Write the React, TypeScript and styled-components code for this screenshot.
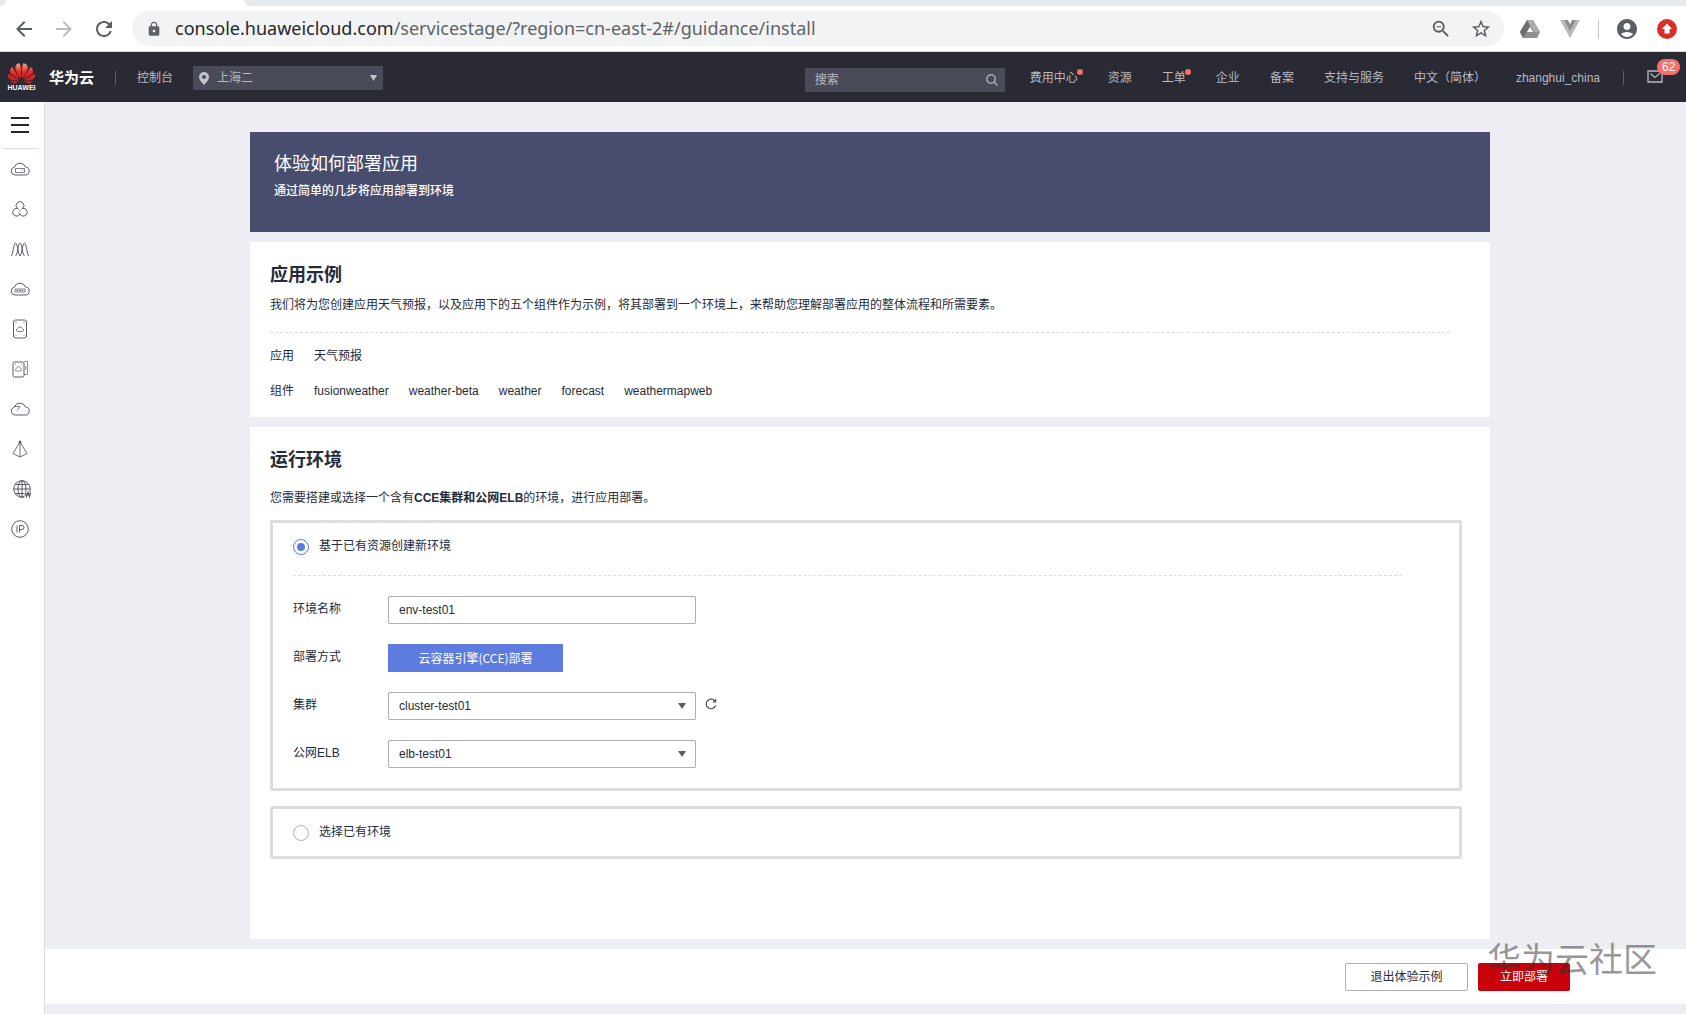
import React, { useState } from "react";
import styled, { createGlobalStyle } from "styled-components";
import {
  MdAccountCircle,
  MdArrowBack,
  MdArrowForward,
  MdLock,
  MdRefresh,
  MdStarBorder,
  MdZoomOut,
} from "react-icons/md";
import { SiHuawei } from "react-icons/si";

const sans = `"Liberation Sans", "Noto Sans CJK SC", sans-serif`;
const cjk = `"Noto Sans CJK SC", sans-serif`;

const GlobalStyle = createGlobalStyle`
  *, *::before, *::after { box-sizing: border-box; }
  body { margin: 0; background: #edeef3; }
  h1, h2, p, dl, dd, fieldset { margin: 0; }
  button, input, select { font: inherit; color: inherit; }
  button { cursor: pointer; }
`;

const Page = styled.div`
  display: flex;
  flex-direction: column;
  min-height: 100vh;
  color: #252b3a;
  font: 12px/18px ${sans};
`;

/* Browser chrome */

const TabStrip = styled.div`
  display: flex;
  justify-content: space-between;
  gap: 238px;
  height: 6px;
  background: #fff;

  &::before,
  &::after {
    content: "";
    background: #e7eaed;
  }

  &::before {
    width: 6px;
    border-bottom-right-radius: 6px;
  }

  &::after {
    flex: 1;
    border-bottom-left-radius: 6px;
  }
`;

const Toolbar = styled.div`
  display: flex;
  align-items: center;
  height: 46px;
  padding: 0 7px 0 12px;
  background: #fff;
  border-bottom: 1px solid #d5d7da;
`;

const NavButtons = styled.div`
  display: flex;
  gap: 16px;
`;

const ToolButton = styled.button<{ $muted?: boolean }>`
  display: flex;
  align-items: center;
  justify-content: center;
  width: 24px;
  height: 28px;
  padding: 0;
  border: 0;
  background: none;
  color: ${(p) => (p.$muted ? "#bbbdc0" : "#5a5d61")};
`;

const Omnibox = styled.div`
  display: flex;
  flex: 1;
  align-items: center;
  height: 35px;
  margin-left: 16px;
  padding: 0 11px 0 14px;
  border-radius: 18px;
  background: #f1f3f4;
  color: #5f6368;
`;

const Address = styled.div`
  flex: 1;
  padding: 0 0 2px 13px;
  font: 18px/24px "Noto Sans", ${cjk};
  white-space: nowrap;

  b {
    color: #25282c;
    font-weight: 400;
  }
`;

const OmniActions = styled.div`
  display: flex;
  gap: 16px;
`;

const Extensions = styled.div`
  display: flex;
  align-items: center;
  gap: 16px;
  margin-left: 14px;
`;

const ToolDivider = styled.i`
  width: 1px;
  height: 20px;
  background: #c6c9cd;
`;

/* Console header */

const Header = styled.header`
  display: flex;
  align-items: center;
  height: 50px;
  padding: 2px 8px 0;
  background: #292a33;
  color: #b9bac4;
`;

const Brand = styled.a`
  display: flex;
  align-items: center;
  gap: 14px;
  padding-bottom: 2px;
  color: #fff;
  font: 700 15px/24px ${cjk};
  text-decoration: none;
`;

const LogoMark = styled.span`
  display: flex;
  flex-direction: column;
  align-items: center;
  width: 27px;
  font: 700 7px/8px "Liberation Sans", sans-serif;
`;

const Bar = styled.i<{ $gap: number }>`
  width: 1px;
  height: 14px;
  margin: 0 ${(p) => p.$gap}px;
  background: #5c5d68;
`;

const HeaderLink = styled.a<{ $dot?: boolean }>`
  position: relative;
  color: inherit;
  text-decoration: none;
  white-space: nowrap;

  &::after {
    content: ${(p) => (p.$dot ? '""' : "none")};
    position: absolute;
    top: 0;
    right: -5px;
    width: 6px;
    height: 6px;
    border-radius: 50%;
    background: #f66f6a;
  }
`;

const HeaderField = styled.label`
  display: flex;
  align-items: center;
  gap: 8px;
  height: 24px;
  background: #494b58;

  select,
  input {
    flex: 1;
    min-width: 0;
    height: 24px;
    padding: 0;
    border: 0;
    outline: 0;
    background: none;
    color: #b9bac4;
    appearance: none;
  }

  input::placeholder {
    color: #b9bac4;
    opacity: 1;
  }
`;

const RegionField = styled(HeaderField)`
  width: 190px;
  margin-left: 20px;
  padding: 0 6px;
`;

const SearchField = styled(HeaderField)`
  width: 200px;
  margin: 4px 0 0 auto;
  padding: 0 7px 0 10px;
`;

const HeaderNav = styled.nav`
  display: flex;
  gap: 30px;
  margin-left: 25px;
`;

const MailLink = styled.a`
  position: relative;
  display: flex;
  margin: 0 15px 4px 0;
  color: #b9bac4;
`;

const MailBadge = styled.span`
  position: absolute;
  top: -11px;
  left: 10px;
  padding: 0 5px;
  border-radius: 8px;
  background: #f66f6a;
  color: #fff;
  font-size: 12px;
  line-height: 16px;
`;

/* Body */

const Body = styled.div`
  display: flex;
  flex: 1;
`;

const Sidebar = styled.nav`
  display: flex;
  flex-direction: column;
  flex-shrink: 0;
  width: 45px;
  padding: 0 5px 0 3px;
  border-right: 1px solid #dddee3;
  background: #fff;
  color: #4a4c57;
`;

const MenuButton = styled.button`
  display: flex;
  align-items: center;
  justify-content: center;
  height: 47px;
  padding: 0 2px 0 0;
  border: 0;
  border-bottom: 1px solid #dcdde1;
  background: none;
  color: #22232b;
`;

const SideLink = styled.a`
  display: flex;
  align-items: center;
  justify-content: center;
  height: 40px;
  padding-right: 2px;
  color: inherit;
`;

const Column = styled.div`
  display: flex;
  flex: 1;
  flex-direction: column;
  min-width: 0;
  padding-bottom: 10px;
`;

const Main = styled.main`
  display: flex;
  flex: 1;
  flex-direction: column;
  gap: 10px;
  width: 100%;
  max-width: 1249px;
  margin: 0 auto;
  padding: 30px 0 10px 9px;
`;

const Banner = styled.section`
  min-height: 100px;
  padding: 16px 24px;
  background: #484d6e;
  color: #fff;

  h1 {
    margin-bottom: 2px;
    font: 400 18px/28px ${cjk};
  }

  p {
    font: 500 12px/24px ${cjk};
  }
`;

const Card = styled.section<{ $grow?: boolean }>`
  flex: ${(p) => (p.$grow ? 1 : "none")};
  padding: 19px 28px 16px 20px;
  background: #fff;
`;

const CardTitle = styled.h2`
  font: 700 18px/24px ${cjk};
`;

const Intro = styled.p<{ $gap: number }>`
  margin-top: ${(p) => p.$gap}px;
  line-height: 20px;
`;

const Dashes = styled.hr<{ $before: number; $after: number; $end: number }>`
  margin: ${(p) => `${p.$before}px ${p.$end}px ${p.$after}px 0`};
  border: 0;
  border-top: 1px dashed #dddee3;
`;

const Facts = styled.dl`
  display: grid;
  grid-template-columns: max-content 1fr;
  gap: 15px 20px;
  line-height: 20px;

  dd {
    display: flex;
    gap: 20px;
  }
`;

const OptionBox = styled.fieldset`
  min-width: 0;
  margin-top: 12px;
  padding: 14px 20px 20px;
  border: 3px solid #dcdddd;
  border-radius: 2px;

  & + & {
    margin-top: 15px;
    padding-bottom: 13px;
  }
`;

const RadioLabel = styled.label`
  display: flex;
  align-items: center;
  gap: 10px;
  height: 20px;

  span {
    padding-bottom: 2px;
  }

  input {
    display: grid;
    place-items: center;
    width: 16px;
    height: 16px;
    margin: 0;
    border: 1px solid #adb0b8;
    border-radius: 50%;
    background: #fff;
    appearance: none;
  }

  input:checked {
    border-color: #5e7ce0;
  }

  input:checked::after {
    content: "";
    width: 8px;
    height: 8px;
    border-radius: 50%;
    background: #5e7ce0;
  }
`;

const FormGrid = styled.div`
  display: grid;
  grid-template-columns: 95px 1fr;
  gap: 20px 0;
`;

const FieldLabel = styled.label`
  line-height: 26px;
`;

const FieldCell = styled.div`
  display: flex;
  align-items: center;
  gap: 9px;
`;

const TextInput = styled.input`
  width: 308px;
  height: 28px;
  padding: 0 10px;
  border: 1px solid #adb0b8;
  border-radius: 1px;
  outline: 0;
  background: #fff;
`;

const SelectShell = styled.div`
  display: grid;
  align-items: center;
  width: 308px;

  select,
  svg {
    grid-area: 1 / 1;
  }

  select {
    height: 28px;
    padding: 0 10px;
    border: 1px solid #adb0b8;
    border-radius: 1px;
    outline: 0;
    background: #fff;
    appearance: none;
  }

  svg {
    justify-self: end;
    margin-right: 10px;
    pointer-events: none;
  }
`;

const ModeButton = styled.button`
  min-width: 175px;
  height: 28px;
  padding: 0 30px;
  border: 0;
  background: #5e7ce0;
  color: #fff;
  font: 12px/28px ${cjk};
`;

const IconButton = styled.button`
  display: flex;
  padding: 0 0 4px;
  border: 0;
  background: none;
  color: #4a4c57;
`;

const Footer = styled.footer`
  position: relative;
  display: flex;
  justify-content: flex-end;
  gap: 10px;
  height: 55px;
  padding: 14px 116px 0 0;
  background: #fff;
`;

const ActionButton = styled.button<{ $primary?: boolean }>`
  min-width: ${(p) => (p.$primary ? 92 : 123)}px;
  height: 28px;
  padding: 0 20px;
  border: 1px solid ${(p) => (p.$primary ? "#c7000b" : "#adb0b8")};
  border-radius: 2px;
  background: ${(p) => (p.$primary ? "#c7000b" : "#fff")};
  color: ${(p) => (p.$primary ? "#fff" : "#252b3a")};
`;

const Watermark = styled.span`
  position: absolute;
  top: -16px;
  right: 29px;
  color: rgba(50, 50, 50, 0.5);
  font: 34px/50px ${cjk};
  pointer-events: none;
`;

/* Drawings */

const Caret = ({ color, size = 8 }: { color: string; size?: number }) => (
  <svg width={size} height="6" viewBox="0 0 8 6" preserveAspectRatio="none" aria-hidden>
    <path d="M0 0h8L4 6z" fill={color} />
  </svg>
);

const HuaweiLogo = () => (
  <LogoMark>
    <svg width="27" height="21" viewBox="0 0 27 21" aria-hidden>
      <defs>
        <linearGradient id="petals" x1="0" y1="0" x2="0" y2="1">
          <stop offset="0" stopColor="#f8a282" />
          <stop offset="0.4" stopColor="#e5302a" />
          <stop offset="1" stopColor="#d0121b" />
        </linearGradient>
      </defs>
      <SiHuawei x={0} y={-3} size={27} fill="url(#petals)" />
    </svg>
    HUAWEI
  </LogoMark>
);

const DriveIcon = () => (
  <svg width="20" height="18" viewBox="0 0 20 18" aria-hidden>
    <path d="M7 0h6l7 12-3 6H3l-3-6z" fill="#8f8f8f" />
    <path d="M7 0h6l7 12h-6z" fill="#adadad" />
    <path d="M7 0 0 12l3 6L10 6z" fill="#6f6f6f" />
    <path d="m10 7 3 5H7z" fill="#fff" />
  </svg>
);

const VueIcon = () => (
  <svg width="20" height="18" viewBox="0 0 20 18" aria-hidden>
    <path d="M0 0h20L10 18z" fill="#b9b9b9" />
    <path d="M4 0h4l2 4 2-4h4l-6 11z" fill="#8c8c8c" />
    <path d="M8 0h4l-2 4z" fill="#fff" />
  </svg>
);

const UpdateIcon = () => (
  <svg width="20" height="20" viewBox="0 0 20 20" aria-hidden>
    <circle cx="10" cy="10" r="10" fill="#d93025" />
    <path d="M10 4.5 15 10h-2.5v4.5h-5V10H5z" fill="#fff" />
  </svg>
);

const PinIcon = () => (
  <svg width="10" height="13" viewBox="0 0 10 13" aria-hidden>
    <path
      d="M5 0a5 5 0 0 0-5 5c0 3.4 5 8 5 8s5-4.6 5-8a5 5 0 0 0-5-5zm0 3a2 2 0 1 1 0 4 2 2 0 0 1 0-4z"
      fill="#c3c4cc"
      fillRule="evenodd"
    />
  </svg>
);

const SearchIcon = () => (
  <svg width="12" height="12" viewBox="0 0 12 12" fill="none" stroke="#a9abb5" strokeWidth="1.5" aria-hidden>
    <circle cx="5" cy="5" r="4.2" />
    <path d="m8 8 3.5 3.5" />
  </svg>
);

const MailIcon = () => (
  <svg width="16" height="13" viewBox="0 0 16 13" fill="none" stroke="currentColor" strokeWidth="1.3" aria-hidden>
    <path d="M1 1h14v11H1z" />
    <path d="m3.5 3.5 4.500 4 4.500-4" />
  </svg>
);

const MenuIcon = () => (
  <svg width="18" height="16" viewBox="0 0 18 16" stroke="currentColor" strokeWidth="2" aria-hidden>
    <path d="M0 1h18M0 8h18M0 15h18" />
  </svg>
);

const ReloadIcon = () => (
  <svg width="12" height="12" viewBox="0 0 12 12" fill="none" stroke="currentColor" strokeWidth="1.2" aria-hidden>
    <path d="M10 3.200A4.800 4.800 0 1 0 10.600 7.500" />
    <path d="M10.600 1v2.800H8" />
  </svg>
);

const cloud = "M5 16a4 4 0 0 1-.6-7.9A5.8 5.8 0 0 1 15.4 8 4 4 0 0 1 15 16z";

const sideIcons: { name: string; art: React.ReactNode }[] = [
  {
    name: "云服务器",
    art: (
      <>
        <path d={cloud} />
        <path d="M5.500 9.500h9v4h-9zM12.500 10.500v1" strokeWidth="0.7" />
      </>
    ),
  },
  {
    name: "应用组合",
    art: (
      <>
        <path d="M7.300 9.400a3.900 3.900 0 1 1 5.400 0M7.300 9.400A3.900 3.900 0 1 0 10 15.200a3.900 3.900 0 1 0 2.700-5.800" />
        <path d="m10 15.200-1.200-2M10 11v1.500M7.300 9.400l1.500.8M12.700 9.400l-1.500.8" strokeWidth="0.7" />
      </>
    ),
  },
  {
    name: "弹性伸缩",
    art: (
      <>
        <path d="M1 17C3.500 15 3.500 4 5.500 4S8 15 10 17M5.500 17C8 15 8 4 10 4s2 11 4.500 13M10 17c2-2 2.500-13 4.500-13S16.500 15 19 17" />
      </>
    ),
  },
  {
    name: "裸金属",
    art: (
      <>
        <path d={cloud} />
        <path d="M5 10h10v3H5z" strokeWidth="0.7" />
        <path d="M6.500 11.500h7" strokeDasharray="1.500 1" />
      </>
    ),
  },
  {
    name: "云硬盘",
    art: (
      <>
        <rect x="3.500" y="1" width="13" height="18" rx="2" />
        <path d="M7.500 12.500a1.500 1.500 0 0 1 0-2.900 2.700 2.700 0 0 1 5 0 1.500 1.500 0 0 1 0 2.900z" strokeWidth="0.7" />
        <path d="M5.500 3.500h1M13.500 3.500h1M5.500 16.500h1M13.500 16.500h1" strokeWidth="0.7" />
      </>
    ),
  },
  {
    name: "备份",
    art: (
      <>
        <rect x="3" y="3" width="11" height="15" rx="1.500" />
        <path d="M14 2.500h3.500v13H14M15.800 7v4" strokeWidth="0.6" />
        <path d="M6.500 12a1.200 1.200 0 0 1 0-2.400 2 2 0 0 1 4 0 1.200 1.200 0 0 1 0 2.400z" strokeWidth="0.6" />
        <path d="M5 5h1M11 5h1" strokeWidth="0.7" />
      </>
    ),
  },
  {
    name: "虚拟私有云",
    art: (
      <>
        <path d={cloud} />
        <path d="M4.500 7.500H10L7 11.500" strokeWidth="0.7" />
      </>
    ),
  },
  {
    name: "负载均衡",
    art: (
      <>
        <path d="M10 3 3 14.500l7 3.500 7-3.500zM10 3v15" strokeWidth="0.800" />
        <circle cx="10" cy="3" r="1" fill="currentColor" />
      </>
    ),
  },
  {
    name: "域名",
    art: (
      <g transform="translate(2 0)">
        <circle cx="10" cy="10" r="8.300" />
        <ellipse cx="10" cy="10" rx="4" ry="8.300" />
        <path d="M10 1.700v16.600M1.700 10h16.600M3.200 5.500h13.600M3.200 14.500h13.600" />
        <path d="M12.500 13h8v6h-8z" fill="#fff" stroke="none" />
        <path d="m13.500 13.500 1 4 1.500-4 1.500 4 1-4" strokeWidth="1.200" />
      </g>
    ),
  },
  {
    name: "弹性公网IP",
    art: (
      <>
        <circle cx="10" cy="10" r="8.300" />
        <path d="M7 6.500v7M9.500 13.500v-7H12a2 2 0 0 1 0 4H9.500" />
      </>
    ),
  },
];

const headerLinks = [
  { text: "费用中心", dot: true },
  { text: "资源" },
  { text: "工单", dot: true },
  { text: "企业" },
  { text: "备案" },
  { text: "支持与服务" },
  { text: "中文（简体）" },
  { text: "zhanghui_china" },
];

const components = ["fusionweather", "weather-beta", "weather", "forecast", "weathermapweb"];

export default function App() {
  const [mode, setMode] = useState<"new" | "existing">("new");
  const [envName, setEnvName] = useState("env-test01");

  return (
    <Page>
      <GlobalStyle />
      <TabStrip />
      <Toolbar>
        <NavButtons>
          <ToolButton aria-label="后退"><MdArrowBack size={24} /></ToolButton>
          <ToolButton aria-label="前进" $muted><MdArrowForward size={24} /></ToolButton>
          <ToolButton aria-label="刷新"><MdRefresh size={26} /></ToolButton>
        </NavButtons>
        <Omnibox>
          <MdLock size={16} />
          <Address>
            <b>console.huaweicloud.com</b>/servicestage/?region=cn-east-2#/guidance/install
          </Address>
          <OmniActions>
            <ToolButton aria-label="缩小"><MdZoomOut size={22} /></ToolButton>
            <ToolButton aria-label="收藏"><MdStarBorder size={22} /></ToolButton>
          </OmniActions>
        </Omnibox>
        <Extensions>
          <ToolButton aria-label="云端硬盘"><DriveIcon /></ToolButton>
          <ToolButton aria-label="Vue"><VueIcon /></ToolButton>
          <ToolDivider />
          <ToolButton aria-label="账户"><MdAccountCircle size={28} /></ToolButton>
          <ToolButton aria-label="更新"><UpdateIcon /></ToolButton>
        </Extensions>
      </Toolbar>

      <Header>
        <Brand href="#home">
          <HuaweiLogo />
          华为云
        </Brand>
        <Bar $gap={21} />
        <HeaderLink href="#console">控制台</HeaderLink>
        <RegionField>
          <PinIcon />
          <select aria-label="区域" defaultValue="上海二">
            <option>上海二</option>
          </select>
          <Caret color="#c3c4cc" size={7} />
        </RegionField>
        <SearchField>
          <input type="text" placeholder="搜索" aria-label="搜索" />
          <SearchIcon />
        </SearchField>
        <HeaderNav>
          {headerLinks.map((link) => (
            <HeaderLink key={link.text} href="#nav" $dot={link.dot}>
              {link.text}
            </HeaderLink>
          ))}
        </HeaderNav>
        <Bar $gap={23} />
        <MailLink href="#messages" aria-label="消息">
          <MailIcon />
          <MailBadge>62</MailBadge>
        </MailLink>
      </Header>

      <Body>
        <Sidebar>
          <MenuButton aria-label="菜单"><MenuIcon /></MenuButton>
          {sideIcons.map((icon) => (
            <SideLink key={icon.name} href="#service" aria-label={icon.name}>
              <svg
                width="20"
                height="20"
                viewBox="0 0 20 20"
                fill="none"
                stroke="currentColor"
                strokeWidth="0.9"
                overflow="visible"
                aria-hidden
              >
                {icon.art}
              </svg>
            </SideLink>
          ))}
        </Sidebar>

        <Column>
          <Main>
            <Banner>
              <h1>体验如何部署应用</h1>
              <p>通过简单的几步将应用部署到环境</p>
            </Banner>

            <Card>
              <CardTitle>应用示例</CardTitle>
              <Intro $gap={10}>
                我们将为您创建应用天气预报，以及应用下的五个组件作为示例，将其部署到一个环境上，来帮助您理解部署应用的整体流程和所需要素。
              </Intro>
              <Dashes $before={17} $after={13} $end={12} />
              <Facts>
                <dt>应用</dt>
                <dd>天气预报</dd>
                <dt>组件</dt>
                <dd>
                  {components.map((name) => (
                    <span key={name}>{name}</span>
                  ))}
                </dd>
              </Facts>
            </Card>

            <Card $grow>
              <CardTitle>运行环境</CardTitle>
              <Intro $gap={18}>
                您需要搭建或选择一个含有<b>CCE集群和公网ELB</b>的环境，进行应用部署。
              </Intro>

              <OptionBox>
                <RadioLabel>
                  <input type="radio" name="env" checked={mode === "new"} onChange={() => setMode("new")} />
                  <span>基于已有资源创建新环境</span>
                </RadioLabel>
                <Dashes $before={18} $after={20} $end={37} />
                <FormGrid>
                  <FieldLabel htmlFor="env-name">环境名称</FieldLabel>
                  <FieldCell>
                    <TextInput
                      id="env-name"
                      type="text"
                      value={envName}
                      onChange={(e) => setEnvName(e.target.value)}
                    />
                  </FieldCell>
                  <FieldLabel htmlFor="deploy-mode">部署方式</FieldLabel>
                  <FieldCell>
                    <ModeButton id="deploy-mode" type="button">云容器引擎(CCE)部署</ModeButton>
                  </FieldCell>
                  <FieldLabel htmlFor="cluster">集群</FieldLabel>
                  <FieldCell>
                    <SelectShell>
                      <select id="cluster" defaultValue="cluster-test01">
                        <option>cluster-test01</option>
                      </select>
                      <Caret color="#575d6c" />
                    </SelectShell>
                    <IconButton type="button" aria-label="刷新集群"><ReloadIcon /></IconButton>
                  </FieldCell>
                  <FieldLabel htmlFor="elb">公网ELB</FieldLabel>
                  <FieldCell>
                    <SelectShell>
                      <select id="elb" defaultValue="elb-test01">
                        <option>elb-test01</option>
                      </select>
                      <Caret color="#575d6c" />
                    </SelectShell>
                  </FieldCell>
                </FormGrid>
              </OptionBox>

              <OptionBox>
                <RadioLabel>
                  <input type="radio" name="env" checked={mode === "existing"} onChange={() => setMode("existing")} />
                  <span>选择已有环境</span>
                </RadioLabel>
              </OptionBox>
            </Card>
          </Main>

          <Footer>
            <ActionButton type="button">退出体验示例</ActionButton>
            <ActionButton type="button" $primary>立即部署</ActionButton>
            <Watermark>华为云社区</Watermark>
          </Footer>
        </Column>
      </Body>
    </Page>
  );
}
